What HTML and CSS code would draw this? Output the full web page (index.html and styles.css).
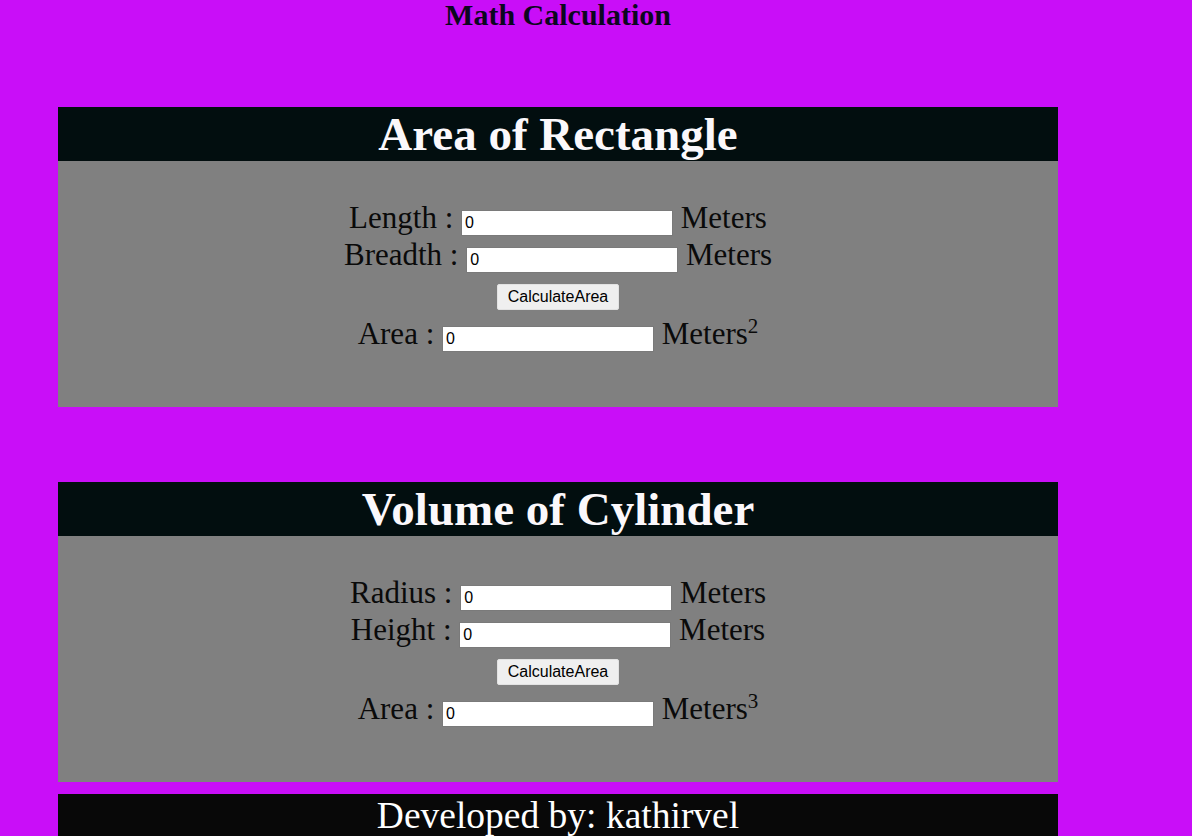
FILE: index.html
```html
<!DOCTYPE html>
<html>
<head>
<meta charset="utf-8">
<title>Math Calculation</title>
<link rel="stylesheet" href="styles.css">
</head>
<body>
<div class="page">
  <h2 class="title">Math Calculation</h2>

  <section class="card card-first">
    <h1 class="card-head">Area of Rectangle</h1>
    <div class="card-body">
      <div class="row">Length : <input class="num" type="text" value="0"> Meters</div>
      <div class="row">Breadth : <input class="num" type="text" value="0"> Meters</div>
      <div class="row"><button class="calc" type="button">CalculateArea</button></div>
      <div class="row row-result">Area : <input class="num" type="text" value="0"> Meters<sup class="pow">2</sup></div>
    </div>
  </section>

  <section class="card card-second">
    <h1 class="card-head">Volume of Cylinder</h1>
    <div class="card-body">
      <div class="row">Radius : <input class="num" type="text" value="0"> Meters</div>
      <div class="row">Height : <input class="num" type="text" value="0"> Meters</div>
      <div class="row"><button class="calc" type="button">CalculateArea</button></div>
      <div class="row row-result">Area : <input class="num" type="text" value="0"> Meters<sup class="pow">3</sup></div>
    </div>
  </section>

  <footer class="footer">Developed by: kathirvel</footer>
</div>
</body>
</html>
```

FILE: styles.css
```css
html, body {
  margin: 0;
  padding: 0;
}

body {
  background: #c90ef8;
  font-family: "Liberation Serif", "Times New Roman", serif;
  color: #000;
  overflow: hidden;
}

.page {
  width: 1000px;
  margin-left: 58px;
}

.title {
  margin: 0;
  font-size: 30px;
  line-height: 30px;
  font-weight: bold;
  text-align: center;
  color: #0c0620;
}

.card-first {
  margin-top: 77px;
}

.card-second {
  margin-top: 75px;
}

.card-head {
  margin: 0;
  background: #020e0f;
  color: #fbf8fb;
  font-size: 47px;
  line-height: 54px;
  height: 54px;
  font-weight: bold;
  text-align: center;
}

.card-body {
  background: #808080;
  box-sizing: border-box;
  height: 246px;
  padding-top: 38px;
  text-align: center;
  font-size: 31px;
  color: #0a0a0a;
}

.row {
  line-height: 37px;
  white-space: nowrap;
}

.row-result {
  padding-top: 5px;
}

.num {
  box-sizing: border-box;
  width: 212px;
  height: 26px;
  padding: 0 3px;
  border: 1px solid #7a7a7a;
  background: #fff;
  font-family: "Liberation Sans", Arial, sans-serif;
  font-size: 16px;
  color: #000;
}

.calc {
  box-sizing: border-box;
  height: 26px;
  padding: 0 10px;
  border: 1px solid #e2e2e2;
  border-radius: 2px;
  background: #efefef;
  font-family: "Liberation Sans", Arial, sans-serif;
  font-size: 16px;
  color: #000;
}

.pow {
  font-size: 21px;
  line-height: 0;
  vertical-align: 11px;
}

.footer {
  margin-top: 12px;
  background: #080808;
  color: #fff;
  font-size: 37.5px;
  text-align: center;
  height: 60px;
}
```
